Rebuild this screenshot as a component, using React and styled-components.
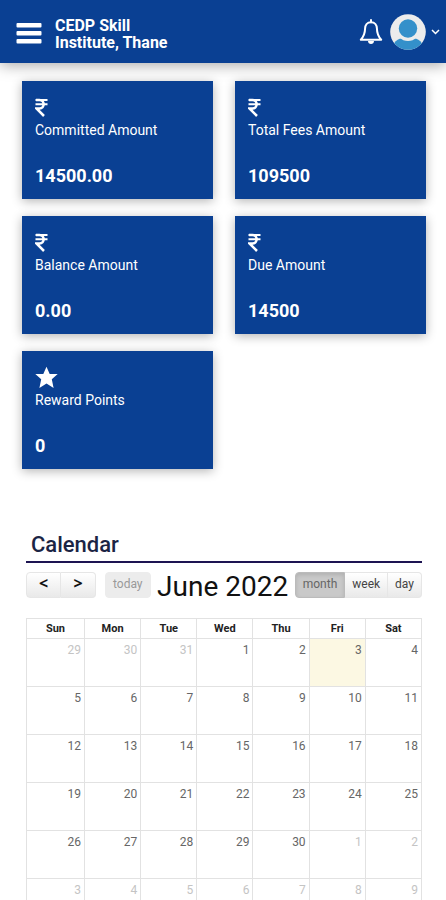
import React from "react";
import styled, { createGlobalStyle } from "styled-components";

const GlobalStyle = createGlobalStyle`
  * {
    box-sizing: border-box;
  }

  html {
    scrollbar-width: none;
  }

  body {
    margin: 0;
    background: #fff;
    color: #222;
    font-family: Roboto, "Liberation Sans", sans-serif;
  }

  button {
    font-family: inherit;
    cursor: pointer;
  }
`;

const Header = styled.header`
  display: flex;
  align-items: center;
  height: 63px;
  padding: 0 6px 0 16px;
  background: #0a4093;
  color: #fff;
  box-shadow: 0 2px 14px rgba(0, 0, 0, 0.35);
`;

const IconButton = styled.button`
  display: flex;
  align-items: center;
  padding: 0;
  border: 0;
  background: none;
  color: inherit;
`;

const Brand = styled.h1`
  max-width: 130px;
  margin: 4px auto 0 13px;
  font-size: 16px;
  font-weight: 700;
  line-height: 17px;
`;

const Actions = styled.div`
  display: flex;
  align-items: center;
  gap: 7px;
`;

const ProfileButton = styled(IconButton)`
  gap: 5px;
`;

const Cards = styled.section`
  display: grid;
  grid-template-columns: 1fr 1fr;
  gap: 17px 22px;
  padding: 18px 20px 0 22px;
`;

const Card = styled.article`
  padding: 15px 13px 12px;
  background: #0a4093;
  color: #fff;
  box-shadow: 0 2px 10px rgba(0, 0, 0, 0.3);
`;

const CardIcon = styled.div`
  display: flex;
  align-items: center;
  height: 23px;
`;

const CardLabel = styled.div`
  font-size: 14px;
  line-height: 22px;
`;

const CardValue = styled.div`
  margin-top: 24px;
  font-size: 18px;
  font-weight: 700;
  line-height: 22px;
`;

const CalendarSection = styled.section`
  padding: 60px 24px 0 26px;
`;

const CalendarTitle = styled.h2`
  margin: 0;
  padding: 2px 5px 3px;
  border-bottom: 2px solid #1d1452;
  color: #1b2444;
  font-size: 22px;
  font-weight: 500;
  line-height: 27px;
`;

const Toolbar = styled.div`
  display: flex;
  align-items: flex-start;
  justify-content: space-between;
  margin: 9px 0 16px;
`;

const ToolbarLeft = styled.div`
  display: flex;
  gap: 9px;
`;

const ButtonGroup = styled.div`
  display: flex;
`;

const ToolButton = styled.button`
  height: 26px;
  padding: 0 7px 2px;
  border: 1px solid ${(props) => (props.$active ? "#bbb" : "#e6e6e6")};
  background: ${(props) =>
    props.$active ? "#c9c9c9" : "linear-gradient(#fff, #e9e9e9)"};
  box-shadow: ${(props) =>
    props.$active ? "inset 0 2px 4px rgba(0, 0, 0, 0.12)" : "none"};
  color: ${(props) => (props.$active ? "#666" : "#444")};
  font-size: 12px;
  line-height: 20px;

  & + & {
    border-left-width: 0;
  }

  &:first-child {
    border-radius: 4px 0 0 4px;
  }

  &:last-child {
    border-radius: 0 4px 4px 0;
  }

  &:only-child {
    border-radius: 4px;
  }

  &:disabled {
    border-color: #ececec;
    background: #ececec;
    color: #999;
    cursor: default;
  }
`;

const ArrowButton = styled(ToolButton)`
  width: 35px;
  padding-bottom: 4px;
  color: #111;
  font-family: "Open Sans", sans-serif;
  font-size: 16px;
  font-weight: 700;
`;

const Month = styled.h3`
  margin: 0;
  color: #111;
  font-size: 28px;
  font-weight: 400;
  line-height: 30px;
  white-space: nowrap;
`;

const Table = styled.table`
  width: 100%;
  table-layout: fixed;
  border-collapse: collapse;
`;

const DayName = styled.th`
  height: 20px;
  padding: 0;
  border: 1px solid #e2e2e2;
  font-size: 11px;
  font-weight: 700;
  line-height: 18px;

  &:first-child {
    width: 58px;
  }
`;

const DayCell = styled.td`
  height: 48px;
  padding: 4px 3px 0 0;
  border: 1px solid #e2e2e2;
  background: ${(props) => (props.$today ? "#fcf8e3" : "#fff")};
  color: ${(props) => (props.$muted ? "#c4c4c4" : "#666")};
  font-size: 12px;
  line-height: 14px;
  text-align: right;
  vertical-align: top;
`;

const cards = [
  { label: "Committed Amount", value: "14500.00" },
  { label: "Total Fees Amount", value: "109500" },
  { label: "Balance Amount", value: "0.00" },
  { label: "Due Amount", value: "14500" },
  { label: "Reward Points", value: "0", star: true },
];

const dayNames = ["Sun", "Mon", "Tue", "Wed", "Thu", "Fri", "Sat"];

const weeks = [
  [29, 30, 31, 1, 2, 3, 4],
  [5, 6, 7, 8, 9, 10, 11],
  [12, 13, 14, 15, 16, 17, 18],
  [19, 20, 21, 22, 23, 24, 25],
  [26, 27, 28, 29, 30, 1, 2],
  [3, 4, 5, 6, 7, 8, 9],
];

// days that belong to May or July
const isOtherMonth = (week, day) =>
  (week === 0 && day > 7) || (week > 3 && day < 15);

const MenuIcon = () => (
  <svg width="26" height="24" viewBox="0 0 26 24" fill="currentColor" aria-hidden="true">
    <rect x="0.5" y="3" width="25" height="4.4" rx="1" />
    <rect x="0.5" y="11" width="25" height="4.4" rx="1" />
    <rect x="0.5" y="19" width="25" height="4.4" rx="1" />
  </svg>
);

const RupeeIcon = () => (
  <svg width="13" height="19" viewBox="0 0 13 19" fill="none" stroke="currentColor" strokeWidth="2" aria-hidden="true">
    <path d="M0.5 2H12.5M0.5 6.2H12.5" />
    <path d="M1 2H4.5C10 2 10 10.5 4.5 10.5H1.5L9 18" strokeWidth="2.5" />
  </svg>
);

const StarIcon = () => (
  <svg width="23" height="23" viewBox="0 0 23 23" fill="currentColor" aria-hidden="true">
    <path d="M11.5 0.8L14.7 8H22.7L16.8 13.2L18.6 22L11.5 17.5L4.4 22L6.2 13.2L0.3 8H8.3Z" />
  </svg>
);

const BellIcon = () => (
  <svg width="24" height="26" viewBox="0 0 24 26" fill="none" stroke="currentColor" strokeWidth="2" aria-hidden="true">
    <path d="M12 3.2C8 3.2 6.2 6.2 6.1 9.3C6 14.5 5 17.4 1.8 20.7H22.2C19 17.4 18 14.5 17.9 9.3C17.8 6.2 16 3.2 12 3.2Z" strokeLinejoin="round" />
    <path d="M12 1V3.2" strokeLinecap="round" />
    <path d="M9 22H15C15 23.8 13.7 25 12 25C10.3 25 9 23.8 9 22Z" fill="currentColor" stroke="none" />
  </svg>
);

const Avatar = () => (
  <svg width="36" height="36" viewBox="0 0 36 36" aria-hidden="true">
    <clipPath id="avatar-clip">
      <circle cx="18" cy="18" r="17.8" />
    </clipPath>
    <g clipPath="url(#avatar-clip)">
      <rect width="36" height="36" fill="#ececec" />
      <path d="M4 36V29.5C6 26 9 24.5 12 24.5H24C27 24.5 30 26 32 29.5V36Z" fill="#3490ca" />
      <circle cx="18" cy="15" r="12" fill="#ececec" />
      <circle cx="18" cy="14.5" r="9.2" fill="#3490ca" />
    </g>
  </svg>
);

const ChevronIcon = () => (
  <svg width="9" height="6" viewBox="0 0 9 6" fill="none" stroke="currentColor" strokeWidth="1.5" aria-hidden="true">
    <path d="M1 1L4.5 4.5L8 1" />
  </svg>
);

const App = () => (
  <>
    <GlobalStyle />
    <Header>
      <IconButton type="button" aria-label="Menu">
        <MenuIcon />
      </IconButton>
      <Brand>CEDP Skill Institute, Thane</Brand>
      <Actions>
        <IconButton type="button" aria-label="Notifications">
          <BellIcon />
        </IconButton>
        <ProfileButton type="button" aria-label="Profile">
          <Avatar />
          <ChevronIcon />
        </ProfileButton>
      </Actions>
    </Header>

    <main>
      <Cards>
        {cards.map(({ label, value, star }) => (
          <Card key={label}>
            <CardIcon>{star ? <StarIcon /> : <RupeeIcon />}</CardIcon>
            <CardLabel>{label}</CardLabel>
            <CardValue>{value}</CardValue>
          </Card>
        ))}
      </Cards>

      <CalendarSection>
        <CalendarTitle>Calendar</CalendarTitle>
        <Toolbar>
          <ToolbarLeft>
            <ButtonGroup>
              <ArrowButton type="button" aria-label="Previous month">&lt;</ArrowButton>
              <ArrowButton type="button" aria-label="Next month">&gt;</ArrowButton>
            </ButtonGroup>
            <ButtonGroup>
              <ToolButton type="button" disabled>today</ToolButton>
            </ButtonGroup>
          </ToolbarLeft>
          <Month>June 2022</Month>
          <ButtonGroup>
            <ToolButton type="button" $active>month</ToolButton>
            <ToolButton type="button">week</ToolButton>
            <ToolButton type="button">day</ToolButton>
          </ButtonGroup>
        </Toolbar>
        <Table>
          <thead>
            <tr>
              {dayNames.map((name) => (
                <DayName key={name} scope="col">{name}</DayName>
              ))}
            </tr>
          </thead>
          <tbody>
            {weeks.map((days, week) => (
              <tr key={week}>
                {days.map((day) => (
                  <DayCell
                    key={day}
                    $muted={isOtherMonth(week, day)}
                    $today={week === 0 && day === 3}
                  >
                    {day}
                  </DayCell>
                ))}
              </tr>
            ))}
          </tbody>
        </Table>
      </CalendarSection>
    </main>
  </>
);

export default App;
